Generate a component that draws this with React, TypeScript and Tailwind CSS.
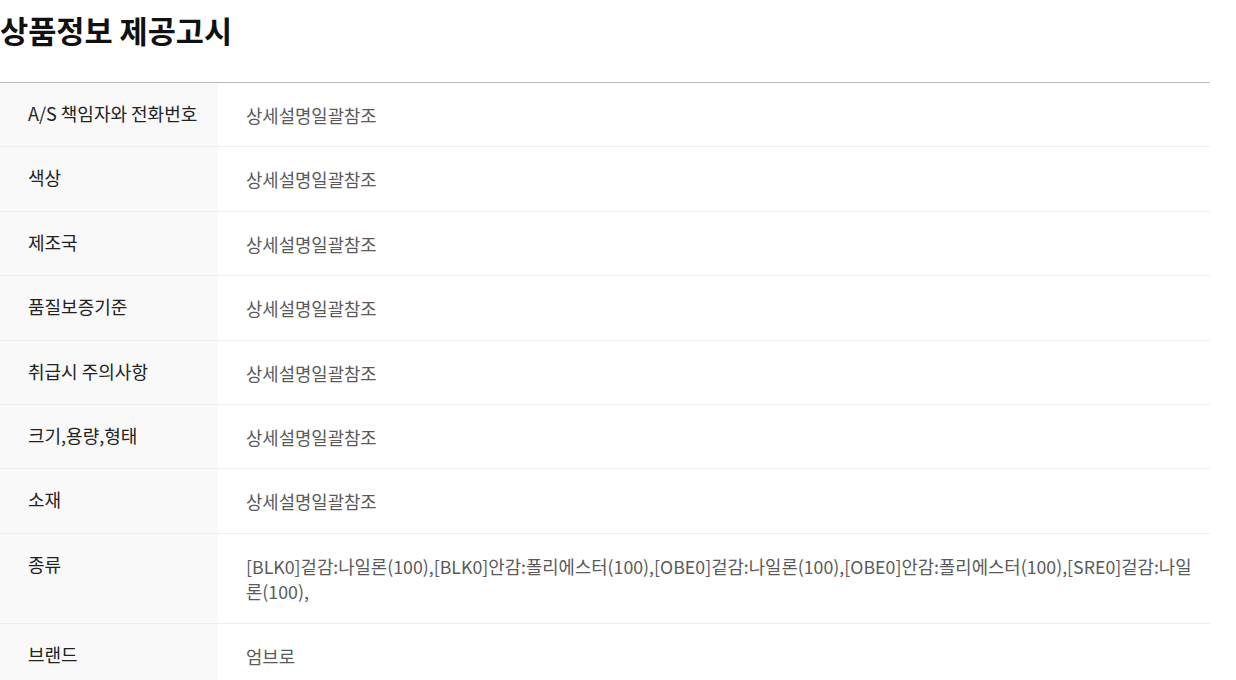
const rows: [string, string][] = [
  ['A/S 책임자와 전화번호', '상세설명일괄참조'],
  ['색상', '상세설명일괄참조'],
  ['제조국', '상세설명일괄참조'],
  ['품질보증기준', '상세설명일괄참조'],
  ['취급시 주의사항', '상세설명일괄참조'],
  ['크기,용량,형태', '상세설명일괄참조'],
  ['소재', '상세설명일괄참조'],
  [
    '종류',
    '[BLK0]겉감:나일론(100),[BLK0]안감:폴리에스터(100),[OBE0]겉감:나일론(100),[OBE0]안감:폴리에스터(100),[SRE0]겉감:나일론(100),',
  ],
  ['브랜드', '엄브로'],
];

export default function App() {
  return (
    <div className="min-h-screen bg-white font-['Noto_Sans_CJK_KR','Noto_Sans',sans-serif]">
      <div className="w-[1210px]">
        <h2 className="pt-[10px] h-[82px] text-[30.6px] leading-[40px] font-bold text-[#111]">
          상품정보 제공고시
        </h2>
        <div className="border-t border-[#bbbbbb]">
          {rows.map(([label, value]) => (
            <div key={label} className="flex border-b border-[#eeeeee]">
              <div className="w-[218px] shrink-0 bg-[#f9f9f9] pl-[28px] pr-3 pt-[18px] pb-[20px] text-[18px] leading-[25.4px] text-[#222]">
                {label}
              </div>
              <div className="flex-1 pl-[28px] pr-[12px] pt-[20px] pb-[18px] text-[17.75px] leading-[25.4px] text-[#5a5a5a] break-all">
                {value}
              </div>
            </div>
          ))}
        </div>
      </div>
    </div>
  );
}
